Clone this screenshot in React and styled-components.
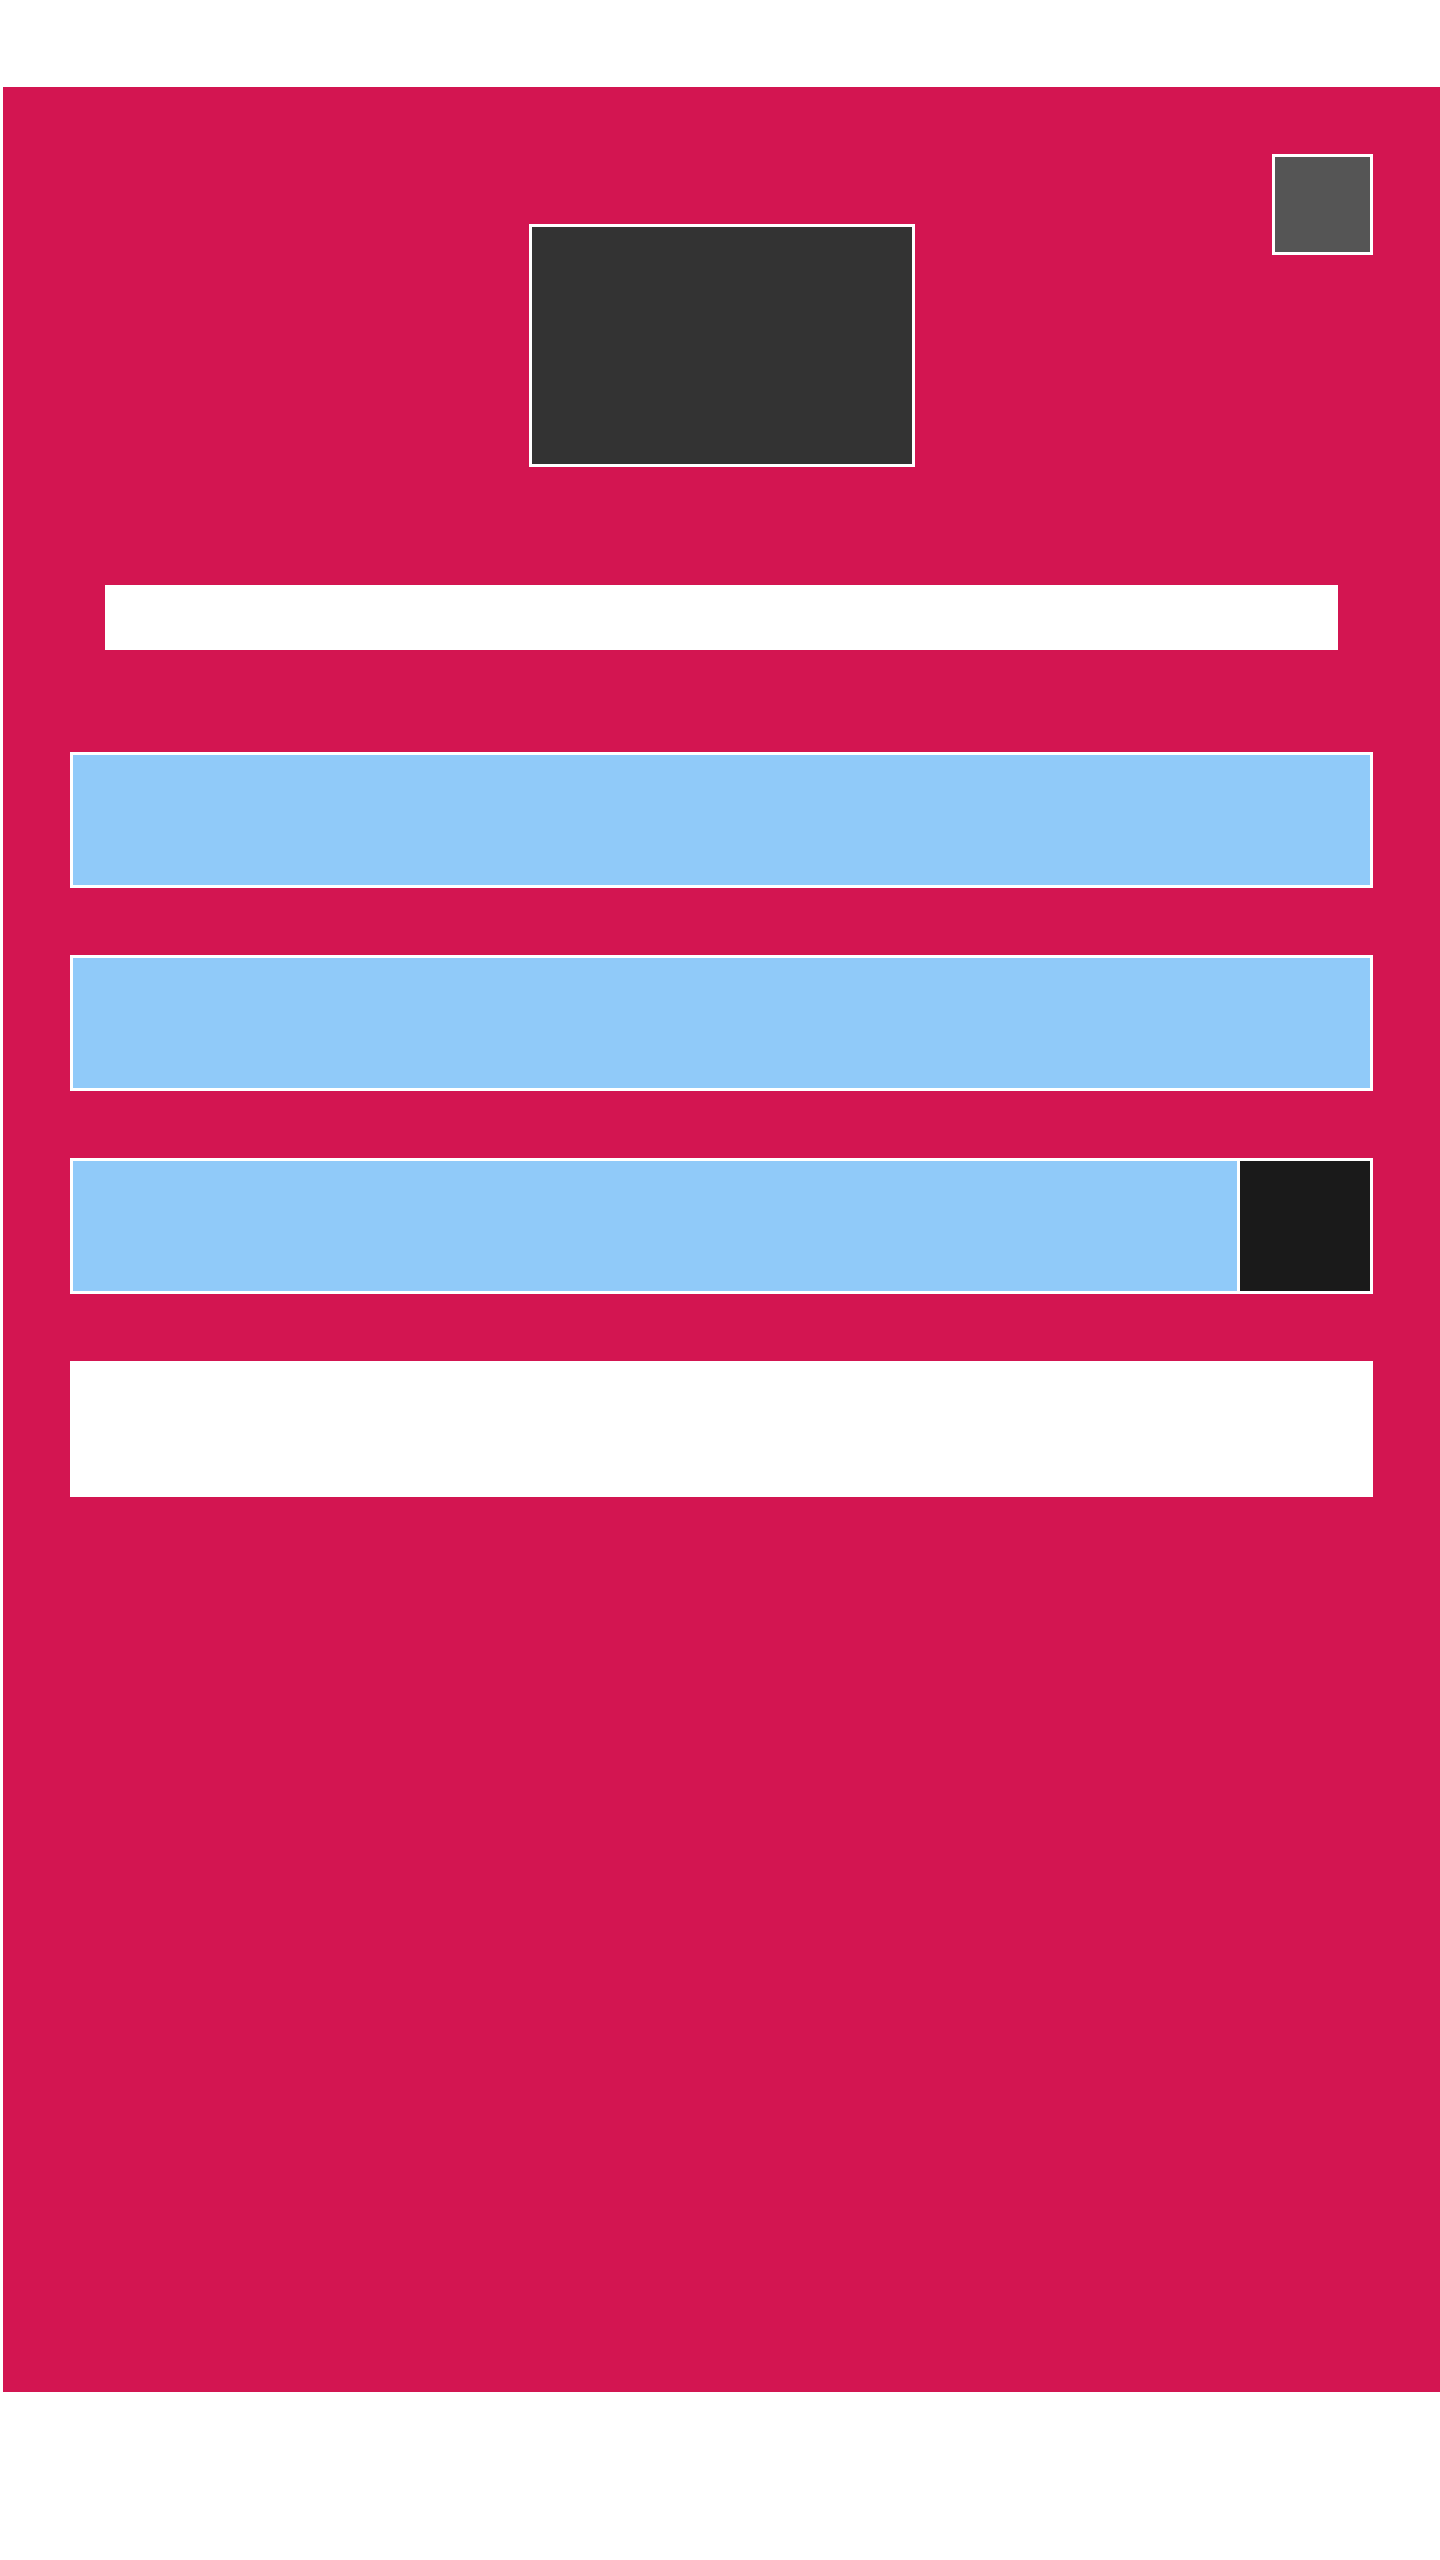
import React from 'react';
import styled, { createGlobalStyle } from 'styled-components';

const GlobalStyle = createGlobalStyle`
  html, body {
    margin: 0;
    padding: 0;
    background: #ffffff;
    font-family: "Liberation Sans", Arial, sans-serif;
  }
  * { box-sizing: border-box; }
`;

const Page = styled.div`
  padding: 87px 0 168px 3px;
`;

const Panel = styled.div`
  position: relative;
  height: 2305px;
  background-color: #d31551;
  padding: 67px;
  display: flex;
  flex-direction: column;
  align-items: center;
`;

const CloseBox = styled.div`
  position: absolute;
  top: 67px;
  right: 67px;
  width: 101px;
  height: 101px;
  background-color: #555555;
  border: 3px solid #ffffff;
`;

const Preview = styled.div`
  margin-top: 70px;
  width: 386px;
  height: 243px;
  background-color: #333333;
  border: 3px solid #ffffff;
`;

const TitleBar = styled.div`
  margin-top: 118px;
  width: 1233px;
  height: 65px;
  background-color: #ffffff;
`;

const List = styled.div`
  margin-top: 102px;
  width: 100%;
  display: flex;
  flex-direction: column;
  gap: 67px;
`;

const Row = styled.div`
  display: flex;
  width: 100%;
  height: 136px;
  background-color: ${(p) => (p.$plain ? '#ffffff' : '#90caf9')};
  border: 3px solid #ffffff;
`;

const RowFill = styled.div`
  flex: 1;
`;

const RowAction = styled.div`
  width: 133px;
  height: 100%;
  background-color: #1a1a1a;
  border-left: 3px solid #ffffff;
`;

export default function App() {
  return (
    <>
      <GlobalStyle />
      <Page>
        <Panel>
          <CloseBox />
          <Preview />
          <TitleBar />
          <List>
            <Row>
              <RowFill />
            </Row>
            <Row>
              <RowFill />
            </Row>
            <Row>
              <RowFill />
              <RowAction />
            </Row>
            <Row $plain>
              <RowFill />
            </Row>
          </List>
        </Panel>
      </Page>
    </>
  );
}
